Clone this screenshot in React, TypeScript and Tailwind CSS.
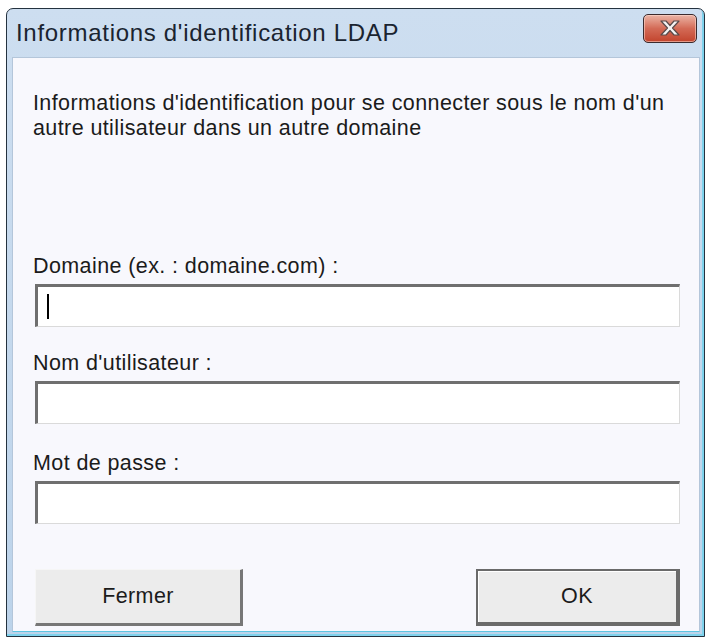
import React from "react";

const font = { fontFamily: '"Liberation Sans", Arial, sans-serif' };

function CloseButton() {
  return (
    <div className="w-[54px] h-[29px] rounded-[5px] border border-[#3b2b2e] bg-gradient-to-b from-[#eab4a6] via-[#d36a56] to-[#c2432c] shadow-[inset_0_0_0_1px_rgba(255,220,210,0.55)] flex items-center justify-center">
      <svg width="26" height="18" viewBox="0 0 26 18">
        <path
          d="M4 2 L9 2 L13 6.5 L17 2 L22 2 L15.5 9 L22 16 L17 16 L13 11.5 L9 16 L4 16 L10.5 9 Z"
          fill="#f4f4f4"
          stroke="#5a4a4a"
          strokeWidth="1.2"
          strokeLinejoin="round"
        />
      </svg>
    </div>
  );
}

function Field({ label, focused }: { label: string; focused?: boolean }) {
  return (
    <div className="flex flex-col">
      <div className="h-[25px] leading-[25px] text-[21.5px] text-[#1b1b1b] tracking-[0.4px]">{label}</div>
      <div className="mt-[5px] ml-[2px] mr-[19px] h-[43px] bg-white border-t-[3px] border-l-[3px] border-r border-b border-t-[#6f6f6f] border-l-[#6f6f6f] border-r-[#dadada] border-b-[#dadada] flex items-center">
        {focused && <div className="ml-[9px] w-[2px] h-[25px] bg-black" />}
      </div>
    </div>
  );
}

export default function App() {
  return (
    <div className="w-[709px] h-[640px] bg-white pt-[8px] pl-[6px]" style={font}>
      <div className="w-[699px] h-[629px] border border-[#24323f] rounded-t-[7px] bg-gradient-to-b from-[#cddef0] to-[#bcd3ea] shadow-[inset_-2px_-2px_0_#7fd2ec] flex flex-col pl-[5px] pr-[4px] pb-[4px]">
        <div className="h-[48px] shrink-0 flex items-center justify-between pl-[4px] pr-[3px]">
          <span className="text-[24px] leading-[30px] text-[#1a2430] tracking-[0.7px]">Informations d'identification LDAP</span>
          <div className="-mt-[10px]">
            <CloseButton />
          </div>
        </div>
        <div className="flex-1 bg-[#f8f8fd] border border-[#b4c6da] border-b-[#5cc4e2] pl-[20px] pt-[33px] flex flex-col">
          <div className="flex flex-col text-[21.5px] text-[#1b1b1b] tracking-[0.4px]">
            <span className="h-[25px] leading-[25px]">Informations d'identification pour se connecter sous le nom d'un</span>
            <span className="h-[25px] leading-[25px]">autre utilisateur dans un autre domaine</span>
          </div>
          <div className="mt-[113px]">
            <Field label="Domaine (ex. : domaine.com) :" focused />
          </div>
          <div className="mt-[24px]">
            <Field label="Nom d'utilisateur :" />
          </div>
          <div className="mt-[27px]">
            <Field label="Mot de passe :" />
          </div>
          <div className="mt-[45px] ml-[2px] mr-[19px] flex justify-between">
            <button className="w-[208px] h-[57px] bg-[#ececec] border-t border-l border-t-[#f6f6f6] border-l-[#f6f6f6] border-r-[3px] border-b-[3px] border-r-[#777777] border-b-[#777777] text-[21.5px] text-[#1b1b1b] tracking-[0.4px]">
              Fermer
            </button>
            <button className="w-[204px] h-[57px] bg-[#ececec] border-[2px] border-r-[4px] border-b-[4px] border-[#6a6a6a] shadow-[inset_1px_1px_0_#ffffff] text-[21.5px] text-[#1b1b1b] tracking-[0.4px]">
              OK
            </button>
          </div>
        </div>
      </div>
    </div>
  );
}
